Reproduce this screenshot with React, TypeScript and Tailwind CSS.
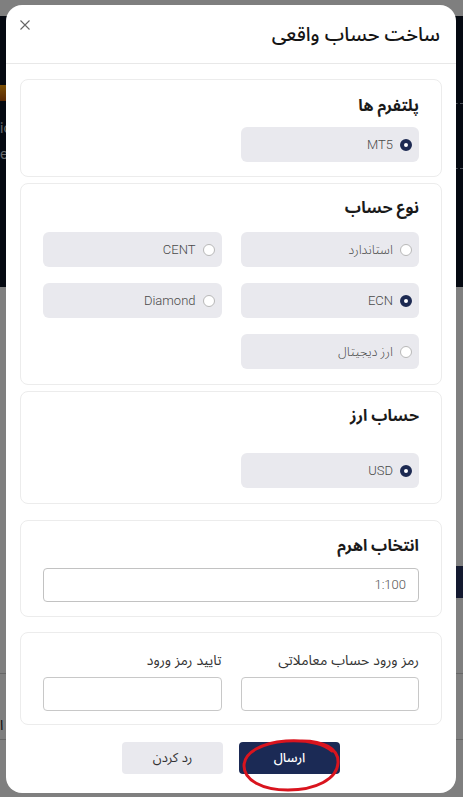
import React from 'react';

const FONT = "font-['Inter','Noto_Sans_Arabic','DejaVu_Sans',sans-serif]";

function Radio({ checked }: { checked?: boolean }) {
  return checked ? (
    <span className="block h-3 w-3 shrink-0 rounded-full border-[4px] border-[#1d2a52] bg-white" />
  ) : (
    <span className="block h-3 w-3 shrink-0 rounded-full border border-[#b8b8b8] bg-white" />
  );
}

function Option({ label, checked }: { label: string; checked?: boolean }) {
  return (
    <div className="flex h-[35px] items-center gap-[7px] rounded-md bg-[#e9e9ee] pr-[7px] font-['Roboto','Noto_Sans_Arabic','DejaVu_Sans',sans-serif] text-[13px] font-light text-[#4a4a4a]">
      <Radio checked={checked} />
      <span className="leading-4">{label}</span>
    </div>
  );
}

function Card({ className = '', children }: { className?: string; children: React.ReactNode }) {
  return <div className={`shrink-0 rounded-lg border border-[#ececec] px-[22px] ${className}`}>{children}</div>;
}

function CardTitle({ children }: { children: React.ReactNode }) {
  return <h3 className="h-6 overflow-visible text-[16px] font-bold leading-6 text-[#1a1a1a]">{children}</h3>;
}

export default function App() {
  return (
    <div className={`relative h-[797px] w-full overflow-hidden bg-white ${FONT}`}>
      {/* page behind the dialog */}
      <div className="h-4 bg-white" />
      <div className="flex h-[271px] flex-col bg-[#0b1322]">
        <div className="mt-[69px] h-[16px] w-[10px] bg-gradient-to-b from-[#f59e0b] to-[#b45309]" />
        <div className="mt-[2px] flex justify-end">
          <div className="w-10 border-t border-dashed border-[#9aa3b2]" />
        </div>
        <span className="mt-[16px] text-[14px] leading-4 text-[#d1d5db]">ic</span>
        <span className="mt-[10px] text-[14px] leading-4 text-[#d1d5db]">e</span>
        <div className="mt-[6px] flex justify-end">
          <div className="w-10 border-t border-dashed border-[#9aa3b2]" />
        </div>
      </div>
      <div className="flex flex-col">
        <div className="mt-[279px] flex justify-end">
          <div className="flex h-8 w-12 items-center bg-[#27335f] pl-2 text-[12px] text-white">ه</div>
        </div>
        <div className="mt-[75px] border-t border-[#cfcfcf]" />
        <div className="mt-[40px] text-[14px] text-[#111]">ا</div>
        <div className="mt-[4px] border-t border-[#cfcfcf]" />
      </div>

      {/* overlay */}
      <div className="absolute inset-0 bg-black/50" />

      {/* dialog */}
      <div dir="rtl" className="absolute left-[6px] top-[5px] flex h-[788px] w-[450px] flex-col rounded-2xl bg-white">
        <div className="flex h-[59px] shrink-0 items-start justify-between border-b border-[#e8e8e8] pl-[14px] pr-[16px]">
          <h2 className="mt-[15px] h-7 text-[19.5px] font-medium leading-7 text-[#151515]">ساخت حساب واقعی</h2>
          <button className="mt-[15px] text-[#666]">
            <svg width="10" height="10" viewBox="0 0 10 10" fill="none" stroke="currentColor" strokeWidth="1.1">
              <path d="M0.5 0.5l9 9M9.5 0.5l-9 9" />
            </svg>
          </button>
        </div>

        <div className="flex flex-col px-[14px] pt-[15px]">
          <Card className="h-[98px] pt-[13px]">
            <CardTitle>پلتفرم ها</CardTitle>
            <div className="mt-[10px] grid grid-cols-2 gap-x-[19px]">
              <Option label="MT5" checked />
            </div>
          </Card>

          <Card className="mt-[6px] h-[202px] pt-[11px]">
            <CardTitle>نوع حساب</CardTitle>
            <div className="mt-[13px] grid grid-cols-2 gap-x-[19px] gap-y-4">
              <Option label="استاندارد" />
              <Option label="CENT" />
              <Option label="ECN" checked />
              <Option label="Diamond" />
              <Option label="ارز دیجیتال" />
            </div>
          </Card>

          <Card className="mt-[6px] h-[113px] pt-[11px]">
            <CardTitle>حساب ارز</CardTitle>
            <div className="mt-[26px] grid grid-cols-2 gap-x-[19px]">
              <Option label="USD" checked />
            </div>
          </Card>

          <Card className="mt-4 h-[97px] pt-[12px]">
            <CardTitle>انتخاب اهرم</CardTitle>
            <div className="mt-[11px] flex h-[34px] items-center rounded border border-[#c2c2c2] pr-3 font-['Roboto',sans-serif] text-[13px] font-light text-[#555]">
              1:100
            </div>
          </Card>

          <Card className="mt-[15px] h-[93px] pt-[17px]">
            <div className="grid grid-cols-2 gap-x-[19px]">
              <div className="flex flex-col gap-[7px]">
                <label className="h-5 text-[14px] leading-5 text-[#333]">رمز ورود حساب معاملاتی</label>
                <input className="h-[34px] rounded border border-[#c8c8c8] bg-white outline-none" />
              </div>
              <div className="flex flex-col gap-[7px]">
                <label className="h-5 text-[14px] leading-5 text-[#333]">تایید رمز ورود</label>
                <input className="h-[34px] rounded border border-[#c8c8c8] bg-white outline-none" />
              </div>
            </div>
          </Card>

          <div className="mt-[17px] flex justify-center gap-4">
            <button className="h-8 w-[101px] rounded bg-[#1b2a55] text-[13px] font-medium text-white">ارسال</button>
            <button className="h-8 w-[101px] rounded bg-[#e9e9ee] text-[13px] text-[#333]">رد کردن</button>
          </div>
        </div>
      </div>

      {/* red annotation circle */}
      <svg
        className="pointer-events-none absolute left-[238px] top-[735px]"
        width="108"
        height="60"
        viewBox="0 0 108 60"
        fill="none"
        stroke="#d9141e"
        strokeWidth="3"
        strokeLinecap="round"
      >
        <path d="M60 6C86 5 101 14 100 28C99 44 78 55 50 55C24 55 6 45 6 31C6 17 24 8 48 6C66 5 84 8 94 16" />
      </svg>
    </div>
  );
}
